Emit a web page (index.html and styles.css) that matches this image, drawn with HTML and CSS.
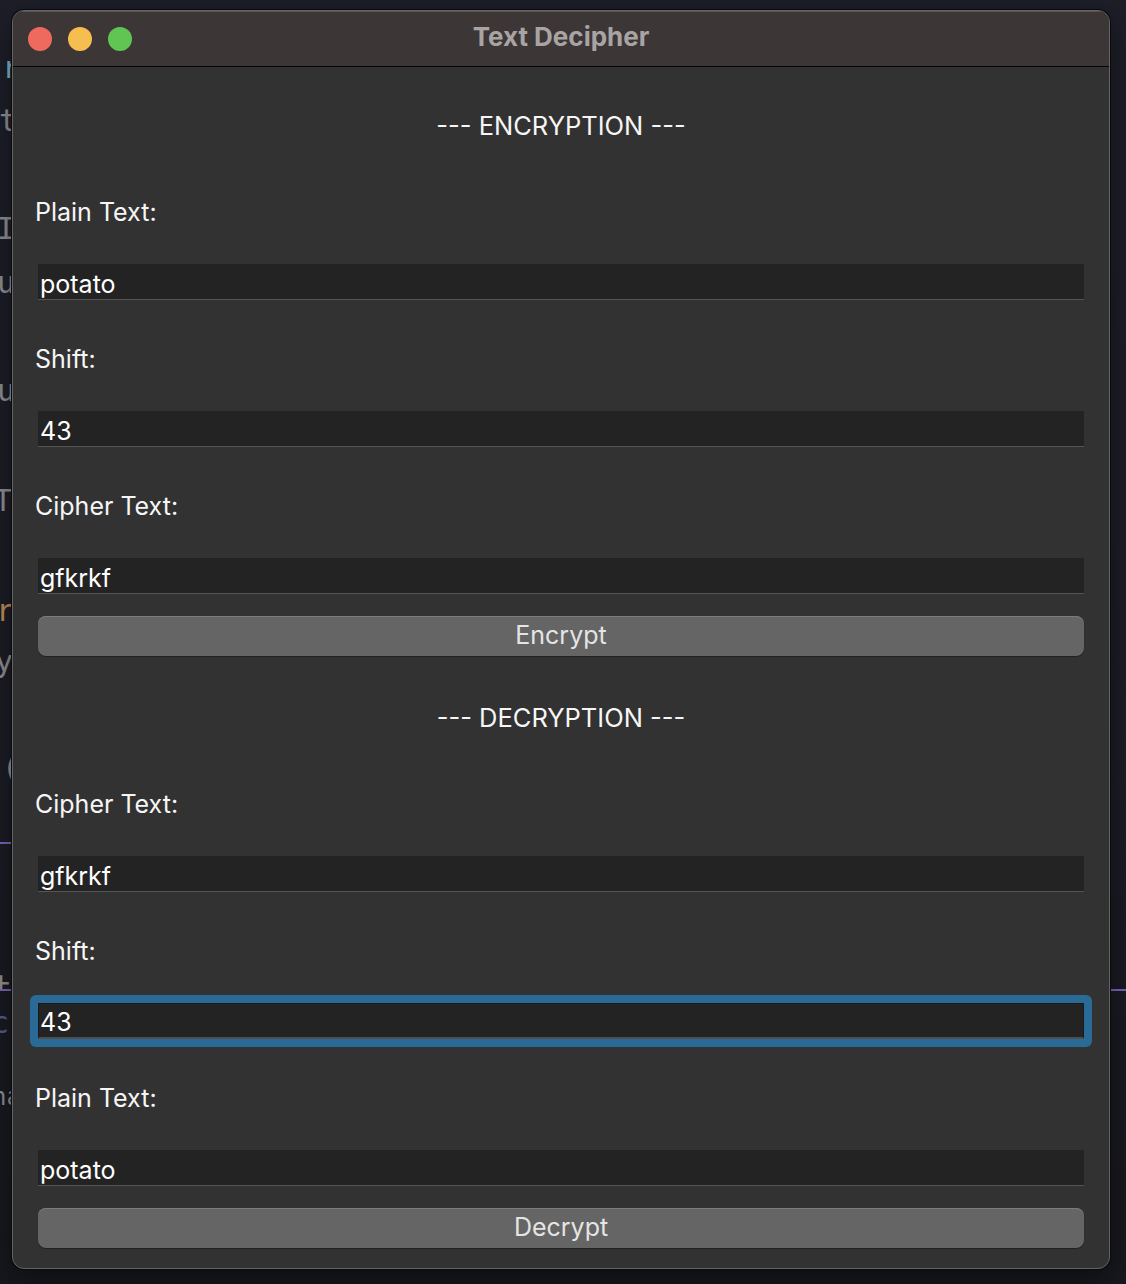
FILE: index.html
```html
<!DOCTYPE html>
<html lang="en">
<head>
<meta charset="utf-8">
<title>Text Decipher</title>
<link rel="stylesheet" href="styles.css">
</head>
<body>
<div class="desktop">
  <div class="code" aria-hidden="true">
    <span class="g cyan g1">r</span>
    <span class="g grey g2">t</span>
    <span class="g grey g3">I</span>
    <span class="g grey g4">u</span>
    <span class="g grey g5">u</span>
    <span class="g grey g6">T</span>
    <span class="g orange g7">r</span>
    <span class="g grey g8">y</span>
    <span class="g grey g9">(</span>
    <span class="rule rule1"></span>
    <span class="g grey g10">.</span>
    <span class="g grey g11">+</span>
    <span class="rule rule2"></span>
    <span class="g navy g12">c</span>
    <span class="g grey g13">na</span>
    <span class="rule rule3"></span>
  </div>

  <div class="window">
    <div class="titlebar">
      <div class="lights">
        <span class="light red"></span>
        <span class="light yellow"></span>
        <span class="light green"></span>
      </div>
      <div class="title">Text Decipher</div>
      <div class="spacer"></div>
    </div>

    <div class="content">
      <div class="heading">--- ENCRYPTION ---</div>
      <div class="label first">Plain Text:</div>
      <div class="input">potato</div>
      <div class="label">Shift:</div>
      <div class="input">43</div>
      <div class="label">Cipher Text:</div>
      <div class="input">gfkrkf</div>
      <div class="button">Encrypt</div>

      <div class="heading second">--- DECRYPTION ---</div>
      <div class="label first">Cipher Text:</div>
      <div class="input">gfkrkf</div>
      <div class="label">Shift:</div>
      <div class="focus-ring"><div class="input focused">43</div></div>
      <div class="label after-focus">Plain Text:</div>
      <div class="input">potato</div>
      <div class="button">Decrypt</div>
    </div>
  </div>
</div>
</body>
</html>
```

FILE: styles.css
```css
* { box-sizing: border-box; }

html, body {
  margin: 0;
  padding: 0;
  width: 1126px;
  height: 1284px;
  overflow: hidden;
}

body {
  background: linear-gradient(180deg, #1d1e28 0%, #1b1c25 60%, #17181e 100%);
  font-family: Inter, "Noto Sans", "Liberation Sans", sans-serif;
}

.desktop {
  position: relative;
  width: 1126px;
  height: 1284px;
  padding: 10px 0 0 12px;
}

/* background editor glyphs peeking out behind the window */
.code {
  position: absolute;
  inset: 0;
  z-index: 0;
}
.g {
  position: absolute;
  font-family: "DejaVu Sans Mono", "Liberation Mono", monospace;
  font-size: 30px;
  line-height: 30px;
}
.grey { color: #8e8e93; }
.cyan { color: #78b2c8; }
.orange { color: #c08b58; }
.navy { color: #555b8c; }
.g1 { left: 2px; top: 53px; }
.g2 { left: -1px; top: 106px; }
.g3 { left: -3px; top: 214px; }
.g4 { left: -3px; top: 268px; }
.g5 { left: -3px; top: 376px; }
.g6 { left: -6px; top: 486px; }
.g7 { left: -4px; top: 596px; }
.g8 { left: -5px; top: 647px; }
.g9 { left: 2px; top: 753px; }
.g10 { left: -12px; top: 868px; }
.g11 { left: -8px; top: 968px; }
.g12 { left: -9px; top: 1008px; }
.g13 { left: -8px; top: 1082px; font-size: 24px; }
.rule {
  position: absolute;
  height: 2px;
  background: #7c62b8;
}
.rule1 { left: 0; top: 842px; width: 12px; }
.rule2 { left: 0; top: 989px; width: 12px; }
.rule3 { left: 1110px; top: 989px; width: 16px; }

/* window */
.window {
  position: relative;
  z-index: 1;
  width: 1098px;
  border: 1px solid #646464;
  border-radius: 12px;
  overflow: hidden;
  background: #323232;
  box-shadow: 0 0 0 1px #0b0b0d, 0 10px 30px rgba(0, 0, 0, 0.45);
}

.titlebar {
  height: 56px;
  background: #3d3636;
  border-bottom: 1px solid #050505;
  display: grid;
  grid-template-columns: 1fr auto 1fr;
  align-items: center;
  box-shadow: inset 0 1px 0 #5a5454;
}

.lights {
  display: flex;
  gap: 16px;
  padding-left: 15px;
  align-items: center;
}
.light {
  width: 24px;
  height: 24px;
  border-radius: 50%;
  display: block;
}
.red { background: #ee6a5e; }
.yellow { background: #f5be4f; }
.green { background: #61c554; }

.title {
  color: #a9a4a4;
  font-weight: 700;
  font-size: 26px;
  line-height: 30px;
  margin-top: -3px;
}

.content {
  padding: 39px 25px 20px;
  display: flex;
  flex-direction: column;
}

.heading {
  color: #f6f6f6;
  font-size: 25.5px;
  line-height: 40px;
  height: 40px;
  text-align: center;
}
.heading.second { margin-top: 42px; }

.label {
  color: #f6f6f6;
  font-size: 25px;
  line-height: 40px;
  height: 40px;
  margin-top: 39px;
  margin-left: -3px;
}
.label.first { margin-top: 46px; }
.label.after-focus { margin-top: 31px; }

.input {
  margin-top: 32px;
  height: 36px;
  background: #232323;
  border-bottom: 1px solid #545454;
  color: #ffffff;
  font-size: 25px;
  line-height: 40px;
  padding-left: 2px;
}

.focus-ring {
  margin: 24px -8px 0;
  padding: 8px;
  background: #2a6a97;
  border-radius: 6px;
}
.input.focused {
  margin-top: 0;
  border: 1px solid #1a1a1a;
  border-bottom: 2px solid #4e4e4e;
  padding-left: 1px;
  line-height: 36px;
}

.button {
  margin-top: 22px;
  height: 40px;
  border-radius: 8px;
  background: #656565;
  box-shadow: inset 0 1px 0 #7c7c7c, 0 1px 1px rgba(0, 0, 0, 0.35);
  color: #e4e4e4;
  font-size: 25px;
  line-height: 39px;
  text-align: center;
}
```
